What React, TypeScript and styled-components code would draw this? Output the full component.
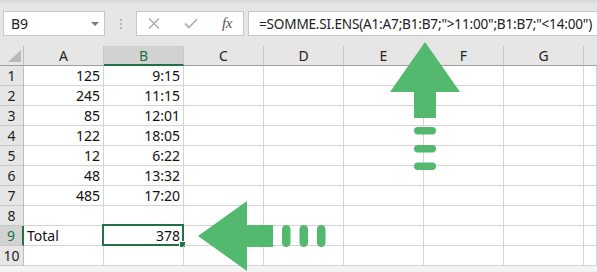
import React from 'react';
import styled, { createGlobalStyle } from 'styled-components';

const GlobalStyle = createGlobalStyle`
  html, body {
    margin: 0;
    padding: 0;
    background: #ffffff;
  }
  body {
    font-family: 'Noto Sans', 'Liberation Sans', sans-serif;
    color: #222;
  }
`;

const green = '#217346';
const arrowGreen = '#52b96f';

const columns = ['A', 'B', 'C', 'D', 'E', 'F', 'G'];

// [col A, col B]
const rows: [string, string][] = [
  ['125', '9:15'],
  ['245', '11:15'],
  ['85', '12:01'],
  ['122', '18:05'],
  ['12', '6:22'],
  ['48', '13:32'],
  ['485', '17:20'],
  ['', ''],
  ['Total', '378'],
  ['', ''],
];

const activeRow = 9;
const activeCol = 'B';

const Page = styled.div`
  position: relative;
  width: 597px;
  height: 272px;
  overflow: hidden;
  background: #f3f3f3;
`;

const Toolbar = styled.div`
  height: 46px;
  box-sizing: border-box;
  padding: 11px 0 0 3px;
  display: flex;
  align-items: flex-start;
  background: linear-gradient(#d6d6d6 0, #e2e2e2 3px, #e6e6e6 6px);
`;

const Box = styled.div`
  height: 25px;
  box-sizing: border-box;
  border: 1px solid #c6c6c6;
  background: #fff;
  display: flex;
  align-items: center;
  flex-shrink: 0;
`;

const NameBox = styled(Box)`
  width: 102px;
  padding-left: 7px;
  font-size: 14px;
  color: #222;
`;

const Caret = styled.span`
  margin-left: auto;
  margin-right: 5px;
  width: 0;
  height: 0;
  border-left: 4px solid transparent;
  border-right: 4px solid transparent;
  border-top: 4px solid #7a7a7a;
`;

const Grip = styled.div`
  margin: 8px 0 0 15px;
  width: 2px;
  flex-shrink: 0;
  display: flex;
  flex-direction: column;
  gap: 2px;

  span {
    width: 2px;
    height: 2px;
    background: #b4b4b4;
  }
`;

const ButtonsBox = styled(Box)`
  width: 108px;
  margin-left: 14px;
  padding-left: 11px;
`;

const IconSlot = styled.span<{ $w: number }>`
  width: ${p => p.$w}px;
  flex-shrink: 0;
  display: flex;
  align-items: center;
`;

const Fx = styled.span`
  font-family: 'Liberation Serif', 'DejaVu Serif', serif;
  font-style: italic;
  font-size: 15px;
  color: #555;
  letter-spacing: -0.5px;
  margin-left: 2px;
`;

const FormulaBox = styled(Box)`
  flex: 1 1 0;
  min-width: 0;
  overflow: hidden;
  margin-left: 4px;
  border-right: none;
  padding-left: 10px;
  font-size: 13.6px;
  letter-spacing: -0.2px;
  color: #222;
  white-space: nowrap;
`;

const Sheet = styled.div`
  display: grid;
  grid-template-columns: 24px repeat(7, 80px) 1fr;
  grid-auto-rows: 20px;
  background: #fff;
`;

const Corner = styled.div`
  position: relative;
  background: #e6e6e6;
  border-right: 1px solid #bcbcbc;
  border-bottom: 1px solid #9e9e9e;
  box-sizing: border-box;

  &::after {
    content: '';
    position: absolute;
    left: 8px;
    top: 4px;
    width: 13px;
    height: 12px;
    background: #b9b9b9;
    clip-path: polygon(100% 0, 100% 100%, 0 100%);
  }
`;

const ColHeader = styled.div<{ $active?: boolean }>`
  box-sizing: border-box;
  background: ${p => (p.$active ? '#d2d2d2' : '#e6e6e6')};
  color: ${p => (p.$active ? green : '#222')};
  border-right: 1px solid #c8c8c8;
  border-bottom: ${p => (p.$active ? `2px solid ${green}` : '1px solid #9e9e9e')};
  font-size: 14px;
  line-height: 19px;
  text-align: center;
`;

const FillHeader = styled.div`
  background: #e6e6e6;
  border-bottom: 1px solid #9e9e9e;
  box-sizing: border-box;
`;

const RowHeader = styled.div<{ $active?: boolean }>`
  box-sizing: border-box;
  background: ${p => (p.$active ? '#d2d2d2' : '#e6e6e6')};
  color: ${p => (p.$active ? green : '#222')};
  border-right: ${p => (p.$active ? `2px solid ${green}` : '1px solid #bcbcbc')};
  border-bottom: 1px solid #c8c8c8;
  font-size: 14px;
  line-height: 20px;
  text-align: center;
`;

const Cell = styled.div<{ $align?: 'left' | 'right'; $selected?: boolean }>`
  position: relative;
  box-sizing: border-box;
  border-right: 1px solid #d4d4d4;
  border-bottom: 1px solid #d4d4d4;
  padding: 0 3px;
  font-size: 14px;
  line-height: 20px;
  text-align: ${p => p.$align || 'right'};
  color: #111;
  white-space: nowrap;

  ${p =>
    p.$selected &&
    `
    &::before {
      content: '';
      position: absolute;
      left: -2px;
      top: -2px;
      right: -1px;
      bottom: -1px;
      border: 2px solid ${green};
    }
    &::after {
      content: '';
      position: absolute;
      right: -3px;
      bottom: -3px;
      width: 5px;
      height: 5px;
      background: ${green};
      border: 1px solid #fff;
    }
  `}
`;

const Overlay = styled.svg`
  position: absolute;
  left: 0;
  top: 0;
  pointer-events: none;
`;

const CloseIcon = () => (
  <svg width="12" height="11" viewBox="0 0 12 11">
    <path d="M1 0.5 L11 10.5 M11 0.5 L1 10.5" stroke="#a8a8a8" strokeWidth="1.3" fill="none" />
  </svg>
);

const CheckIcon = () => (
  <svg width="14" height="11" viewBox="0 0 14 11">
    <path d="M1 5.5 L5 9.5 L13 1" stroke="#b4b4b4" strokeWidth="1.8" fill="none" />
  </svg>
);

const Arrows = () => (
  <Overlay width="597" height="272" viewBox="0 0 597 272">
    <g fill={arrowGreen}>
      <polygon points="425,42 460,92 436,92 436,118 414,118 414,92 390,92" />
      <rect x="414" y="127" width="22" height="7.5" rx="3.7" />
      <rect x="414" y="145" width="22" height="7.5" rx="3.7" />
      <rect x="414" y="162.5" width="22" height="7.5" rx="3.7" />
      <polygon points="198,236 247,201 247,225 273,225 273,247 247,247 247,271" />
      <rect x="282" y="225" width="8.5" height="22" rx="4.2" />
      <rect x="299.5" y="225" width="8.5" height="22" rx="4.2" />
      <rect x="317" y="225" width="8.5" height="22" rx="4.2" />
    </g>
  </Overlay>
);

const App = () => (
  <Page>
    <GlobalStyle />
    <Toolbar>
      <NameBox>
        B9
        <Caret />
      </NameBox>
      <Grip>
        <span />
        <span />
        <span />
      </Grip>
      <ButtonsBox>
        <IconSlot $w={36}>
          <CloseIcon />
        </IconSlot>
        <IconSlot $w={36}>
          <CheckIcon />
        </IconSlot>
        <Fx>fx</Fx>
      </ButtonsBox>
      <FormulaBox>=SOMME.SI.ENS(A1:A7;B1:B7;"&gt;11:00";B1:B7;"&lt;14:00")</FormulaBox>
    </Toolbar>

    <Sheet>
      <Corner />
      {columns.map(c => (
        <ColHeader key={c} $active={c === activeCol}>
          {c}
        </ColHeader>
      ))}
      <FillHeader />

      {rows.map(([a, b], i) => {
        const n = i + 1;
        return (
          <React.Fragment key={n}>
            <RowHeader $active={n === activeRow}>{n}</RowHeader>
            <Cell $align={a === 'Total' ? 'left' : 'right'}>{a}</Cell>
            <Cell $selected={n === activeRow}>{b}</Cell>
            {columns.slice(2).map(c => (
              <Cell key={c} />
            ))}
            <Cell />
          </React.Fragment>
        );
      })}
    </Sheet>

    <Arrows />
  </Page>
);

export default App;
